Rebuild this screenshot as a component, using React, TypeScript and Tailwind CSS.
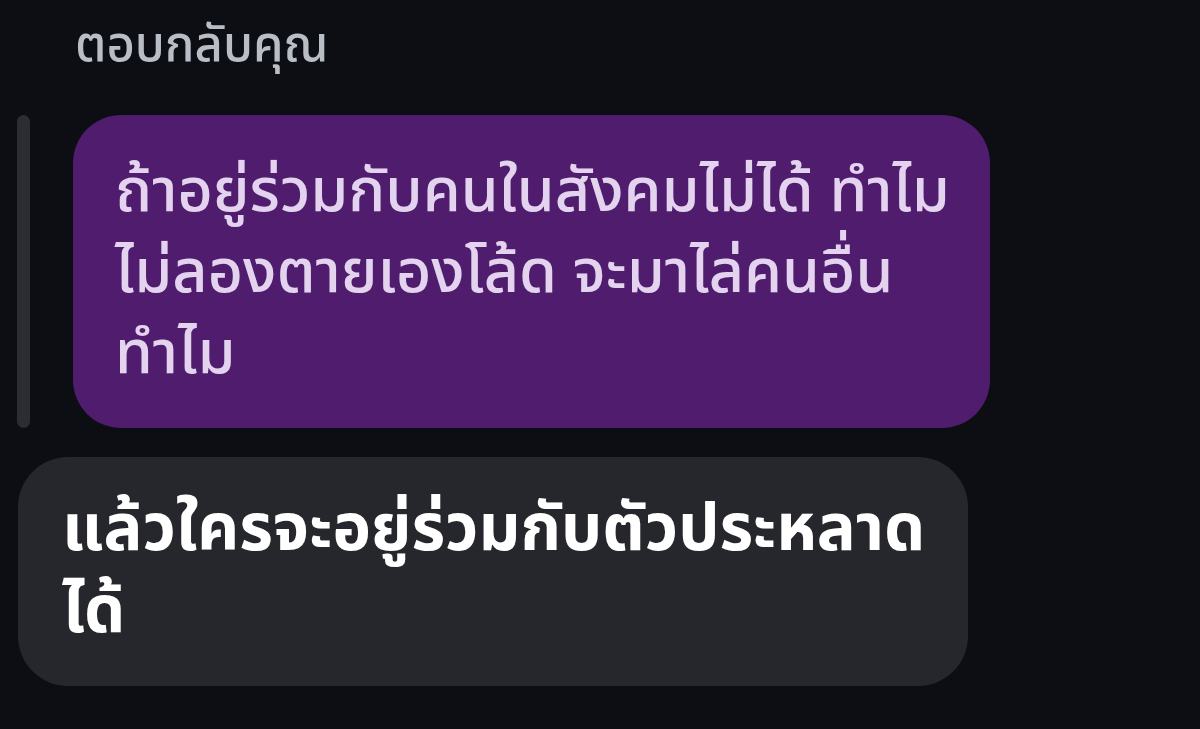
export default function App() {
  return (
    <div className="w-[1200px] h-[729px] bg-[#0c0e13] overflow-hidden flex flex-col font-['Noto_Sans_Thai','Noto_Sans',sans-serif]">
      <div className="pl-[75px] pt-[16px] h-[100px] text-[#b9bdc5] font-medium text-[49px] leading-[60px]">ตอบกลับคุณ</div>
      <div className="flex mt-[15px] pl-[17px] gap-[43px]">
        <div className="w-[13px] rounded-full bg-[#2b2d32]" />
        <div className="w-[917px] h-[313px] rounded-[48px] bg-[#4f1c6e] pl-[42px] pr-[10px] pt-[37px] text-[#e3d3ee] font-medium text-[61px] leading-[81px] flex flex-col">
          <span className="whitespace-nowrap">ถ้าอยู่ร่วมกับคนในสังคมไม่ได้ ทำไม</span>
          <span className="whitespace-nowrap">ไม่ลองตายเองโล้ด จะมาไล่คนอื่น</span>
          <span className="whitespace-nowrap">ทำไม</span>
        </div>
      </div>
      <div className="ml-[18px] mt-[29px] w-[950px] h-[229px] rounded-[50px] bg-[#25272c] pl-[44px] pr-[10px] pt-[32px] text-white font-bold text-[65px] leading-[82px] flex flex-col">
        <span className="whitespace-nowrap">แล้วใครจะอยู่ร่วมกับตัวประหลาด</span>
        <span className="whitespace-nowrap">ได้</span>
      </div>
    </div>
  );
}
